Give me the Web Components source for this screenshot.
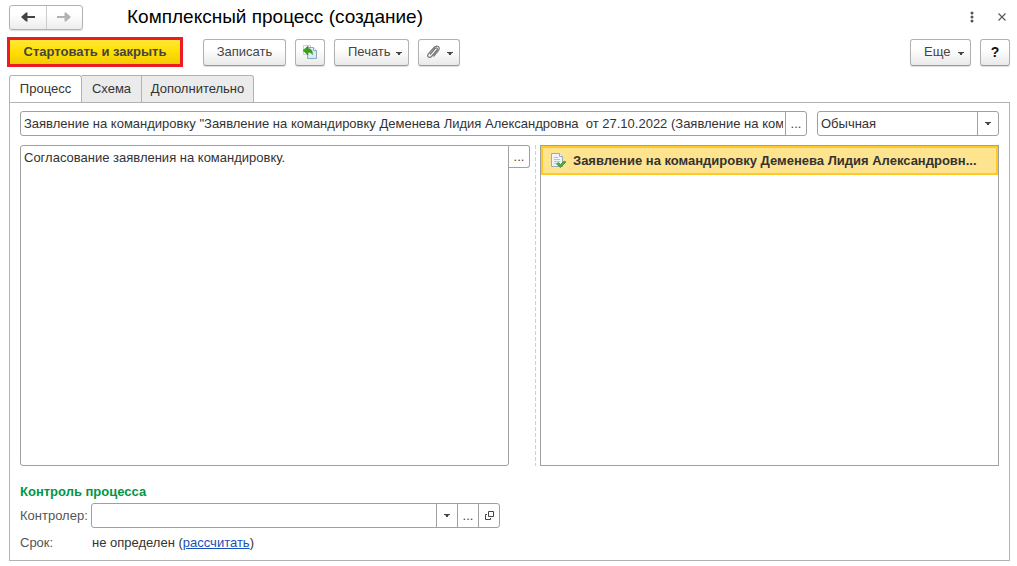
<!DOCTYPE html>
<html lang="ru">
<head>
<meta charset="utf-8">
<title>Комплексный процесс (создание)</title>
<style>
html { height: 100%; }
body { margin: 0; min-height: 100%; display: flex; background: #fff; color: #333; font: 13px/16px "Liberation Sans", Arial, sans-serif; }
process-form { flex: 1; min-width: 0; }
</style>
</head>
<body>
<process-form></process-form>
<script>
const define = (name, html, setup) => customElements.define(name, class extends HTMLElement {
  constructor() {
    super();
    this.attachShadow({ mode: "open" }).innerHTML = "<style>*{box-sizing:border-box}button,input,select,textarea{font:inherit;color:inherit;margin:0}:focus{outline:none}</style>" + html;
  }
  connectedCallback() { if (setup) setup(this, this.shadowRoot); }
});
const ARROW = '<svg class="arrow" width="6" height="3" viewBox="0 0 6 3" aria-hidden="true"><path d="M0 0h6v1H5L4 2v1H2V2L1 1H0z" fill="#444"/></svg>';

define("tool-button", `
<style>
:host { display: block; flex: none; }
button { height: 27px; width: 100%; padding: 0; display: flex; align-items: center; justify-content: center; border: 1px solid #b2b2b2; border-bottom-color: #999; border-radius: 3px; background: linear-gradient(#fff 35%, #e9e9e9); color: #444; box-shadow: 0 1px 1px #ddd; white-space: nowrap; }
:host([primary]) button { height: 30px; border: 3px solid #ed1c24; border-radius: 0; background: linear-gradient(#ffe838, #ffdf00 50%, #f0cc00); font-weight: bold; box-shadow: none; }
:host([menu]) button { padding: 0 6px 0 13px; justify-content: space-between; }
:host([menu][compact]) button { padding-left: 7px; }
:host([help]) button { color: #111; font-weight: bold; font-size: 14px; }
.arrow { flex: none; margin-top: 2px; }
</style>
<button type="button"><slot></slot></button>`, (el, root) => {
  const b = root.querySelector("button");
  if (el.title) b.setAttribute("aria-label", el.title);
  if (el.hasAttribute("menu")) b.insertAdjacentHTML("beforeend", ARROW);
});

define("nav-history", `
<style>
:host { display: flex; width: 74px; height: 25px; border: 1px solid #b2b2b2; border-radius: 3px; background: linear-gradient(#fff 35%, #ececec); box-shadow: 0 1px 1px #ddd; }
button { flex: 1; border: 0; padding: 0; background: none; display: grid; place-items: center; color: #444; }
button + button { border-left: 1px solid #ccc; color: #b2b2b2; }
</style>
<button type="button" aria-label="Назад"><svg width="14" height="10" viewBox="0 0 14 10"><path d="M0 5l5-4.500h1.500V4H14v2H6.500v3.500H5z" fill="currentColor"/></svg></button>
<button type="button" aria-label="Вперед"><svg width="14" height="10" viewBox="0 0 14 10"><path d="M14 5L9 .5H7.500V4H0v2h7.500v3.500H9z" fill="currentColor"/></svg></button>`);

define("window-header", `
<style>
:host { display: flex; align-items: center; height: 26px; padding-right: 1px; }
h1 { flex: 1; margin: 0 0 0 44px; font-size: 19px; line-height: 24px; font-weight: normal; color: #000; }
button { width: 14px; height: 18px; padding: 0; border: 0; background: none; display: grid; place-items: center; margin-left: 16px; }
</style>
<nav-history></nav-history>
<h1><slot></slot></h1>
<button type="button" aria-label="Меню"><svg width="4" height="12" viewBox="0 0 4 12" fill="#555"><circle cx="2" cy="2" r="1.500"/><circle cx="2" cy="6" r="1.500"/><circle cx="2" cy="10" r="1.500"/></svg></button>
<button type="button" aria-label="Закрыть"><svg width="8" height="8" viewBox="0 0 8 8"><path d="M.5.5l7 7m0-7l-7 7" stroke="#555" stroke-width="1.100"/></svg></button>`);

define("command-bar", `
<style>
:host { display: flex; align-items: center; gap: 9px; margin: 7px 0 0 -2px; }
.start { width: 176px; margin-right: 11px; }
.save { width: 83px; } .icon, .help { width: 30px; } .print { width: 75px; } .clip { width: 42px; }
.more { width: 61px; margin-left: auto; }
</style>
<tool-button primary class="start">Стартовать и закрыть</tool-button>
<tool-button class="save">Записать</tool-button>
<tool-button class="icon" title="Заполнить"><svg width="16" height="16" viewBox="0 0 16 16"><path d="M1.500 1.500h7v9h-7z" fill="#fff" stroke="#c9d0d6"/><path d="M5.500 3.500h6l3 3v8h-9z" fill="#dceaf5" stroke="#8ca8be"/><path d="M11.500 3.500v3h3" fill="#fff" stroke="#8ca8be"/><path d="M1 6.500L6 2v2.500c3 .3 4.500 2 4.500 6C9.500 8.800 8.500 8.200 6 8.200V11z" fill="#39a317" stroke="#26850c" stroke-width=".5"/></svg></tool-button>
<tool-button menu class="print">Печать</tool-button>
<tool-button menu compact class="clip" title="Файлы"><svg width="15" height="14" viewBox="0 0 15 14"><path d="M4 9.500l5-6c1.500-1.500 3.200 0 2 1.500l-5.500 6.500c-2 2-5 0-3.300-2.500L8 2.500C10.500-.5 15 2 12.500 5.500L7.500 11.500" fill="none" stroke="#777" stroke-width="1.200"/></svg></tool-button>
<tool-button menu class="more">Еще</tool-button>
<tool-button help class="help">?</tool-button>`);

define("tab-strip", `
<style>
:host { display: flex; margin: 8px 0 -1px; }
button { width: 112px; height: 28px; padding: 0; border: 1px solid #b2b2b2; border-left-width: 0; border-top-right-radius: 3px; background: #ebebeb; white-space: nowrap; }
button:nth-of-type(1) { width: 73px; border-left-width: 1px; border-top-left-radius: 3px; background: #fff; border-bottom-color: #fff; }
button:nth-of-type(2) { width: 60px; border-top-right-radius: 0; }
</style>
<button type="button" role="tab" aria-selected="true">Процесс</button><button type="button" role="tab">Схема</button><button type="button" role="tab">Дополнительно</button>`);

const ACTIONS = {
  drop: ["Список", ARROW],
  pick: ["Выбрать", "..."],
  open: ["Открыть", '<svg width="9" height="9" viewBox="0 0 9 9"><path d="M3.500.5h5v5h-5zM2 3.500H.5v5h5V7" fill="none" stroke="#444"/></svg>']
};
define("field-box", `
<style>
:host { display: flex; align-items: center; min-width: 0; }
label { flex: none; width: 71px; color: #555; }
label[hidden] { display: none; }
.box { flex: 1; display: flex; min-width: 0; height: 25px; border: 1px solid #a0a0a0; border-radius: 3px; background: #fff; }
input { flex: 1; min-width: 0; border: 0; padding: 0 2px 0 3px; background: none; }
button { width: 21px; padding: 0; border: 0; border-left: 1px solid #a0a0a0; background: none; display: grid; place-items: center; flex: none; color: #444; }
</style>
<label for="field" hidden></label><div class="box"><input id="field" type="text"></div>`, (el, root) => {
  const input = root.querySelector("input"), label = root.querySelector("label"), box = root.querySelector(".box");
  input.value = el.getAttribute("value") || "";
  if (el.hasAttribute("caption")) { label.hidden = false; label.textContent = el.getAttribute("caption"); }
  else input.setAttribute("aria-label", el.getAttribute("name"));
  for (const key of el.getAttribute("actions").split(" "))
    box.insertAdjacentHTML("beforeend", `<button type="button" aria-label="${ACTIONS[key][0]}">${ACTIONS[key][1]}</button>`);
});

define("choice-box", `
<style>
:host { display: grid; grid-template-columns: 1fr 21px; height: 25px; border: 1px solid #a0a0a0; border-radius: 3px; background: #fff; }
select { grid-area: 1 / 1 / 2 / 3; appearance: none; border: 0; background: none; padding: 0 24px 0 3px; width: 100%; }
span { grid-area: 1 / 2; border-left: 1px solid #a0a0a0; display: grid; place-items: center; pointer-events: none; }
</style>
<select aria-label="Важность"><option>Обычная</option><option>Высокая</option><option>Низкая</option></select><span>${ARROW}</span>`);

define("note-editor", `
<style>
:host { display: flex; align-items: flex-start; min-width: 0; }
textarea { flex: 1; align-self: stretch; min-width: 0; resize: none; border: 1px solid #a0a0a0; border-radius: 3px 0 3px 3px; padding: 4px 3px; background: #fff; overflow: auto; }
button { width: 21px; height: 23px; padding: 0; border: 1px solid #a0a0a0; border-left: 0; border-radius: 0 3px 3px 0; background: #fff; color: #444; }
</style>
<textarea aria-label="Описание">Согласование заявления на командировку.</textarea><button type="button" aria-label="Редактировать">...</button>`);

define("subject-list", `
<style>
:host { display: block; min-width: 0; border: 1px solid #a0a0a0; }
.row { display: flex; align-items: center; gap: 7px; height: 29px; border: 2px solid #ffc926; background: #ffe48f; padding: 0 6px 0 8px; font-weight: bold; }
svg { flex: none; }
.name { overflow: hidden; text-overflow: ellipsis; white-space: nowrap; }
</style>
<div class="row"><svg width="15" height="15" viewBox="0 0 15 15"><path d="M.5.500h8l3 3v10H.5z" fill="#edf3f8" stroke="#98aabc"/><path d="M8.500.5v3h3" fill="#fff" stroke="#98aabc"/><path d="M3 4.500h4M3 6.500h6M3 8.500h6M3 10.500h3" stroke="#b4c3d1"/><path d="M5.500 11l2-1.500 2 2 3.500-3.500L15 9l-5.500 5.500z" fill="#4eae2d" stroke="#2c8616" stroke-width=".6"/></svg><span class="name"><slot></slot></span></div>`);

define("process-form", `
<style>
:host { display: flex; flex-direction: column; padding: 4px 7px 5px 9px; }
main { flex: 1; display: flex; flex-direction: column; border: 1px solid #b2b2b2; padding: 8px 10px 6px; min-width: 0; }
.top { display: grid; grid-template-columns: minmax(0, 787fr) minmax(0, 182fr); gap: 10px; margin-bottom: 9px; }
.panes { flex: 1; min-height: 120px; display: grid; grid-template-columns: minmax(0, 510fr) 10px minmax(0, 459fr); }
.split { justify-self: center; width: 1px; background: repeating-linear-gradient(#d0d0d0 0 4px, transparent 4px 6px); }
h2 { margin: 18px 0 3px; font-size: 13px; line-height: 16px; color: #009646; }
.controller { max-width: 480px; }
.due { display: flex; align-items: center; margin-top: 4px; min-height: 22px; }
.due > :first-child { width: 72px; color: #555; }
a { color: #1a4fb5; }
</style>
<window-header>Комплексный процесс (создание)</window-header>
<command-bar></command-bar>
<tab-strip role="tablist"></tab-strip>
<main>
  <div class="top">
    <field-box name="Наименование" actions="pick" value='Заявление на командировку "Заявление на командировку Деменева Лидия Александровна  от 27.10.2022 (Заявление на командировку)"'></field-box>
    <choice-box></choice-box>
  </div>
  <div class="panes">
    <note-editor></note-editor>
    <div class="split"></div>
    <subject-list>Заявление на командировку Деменева Лидия Александровн...</subject-list>
  </div>
  <h2>Контроль процесса</h2>
  <field-box class="controller" caption="Контролер:" actions="drop pick open"></field-box>
  <div class="due"><span>Срок:</span><span>не определен (<a href="#due">рассчитать</a>)</span></div>
</main>`);
</script>
</body>
</html>
